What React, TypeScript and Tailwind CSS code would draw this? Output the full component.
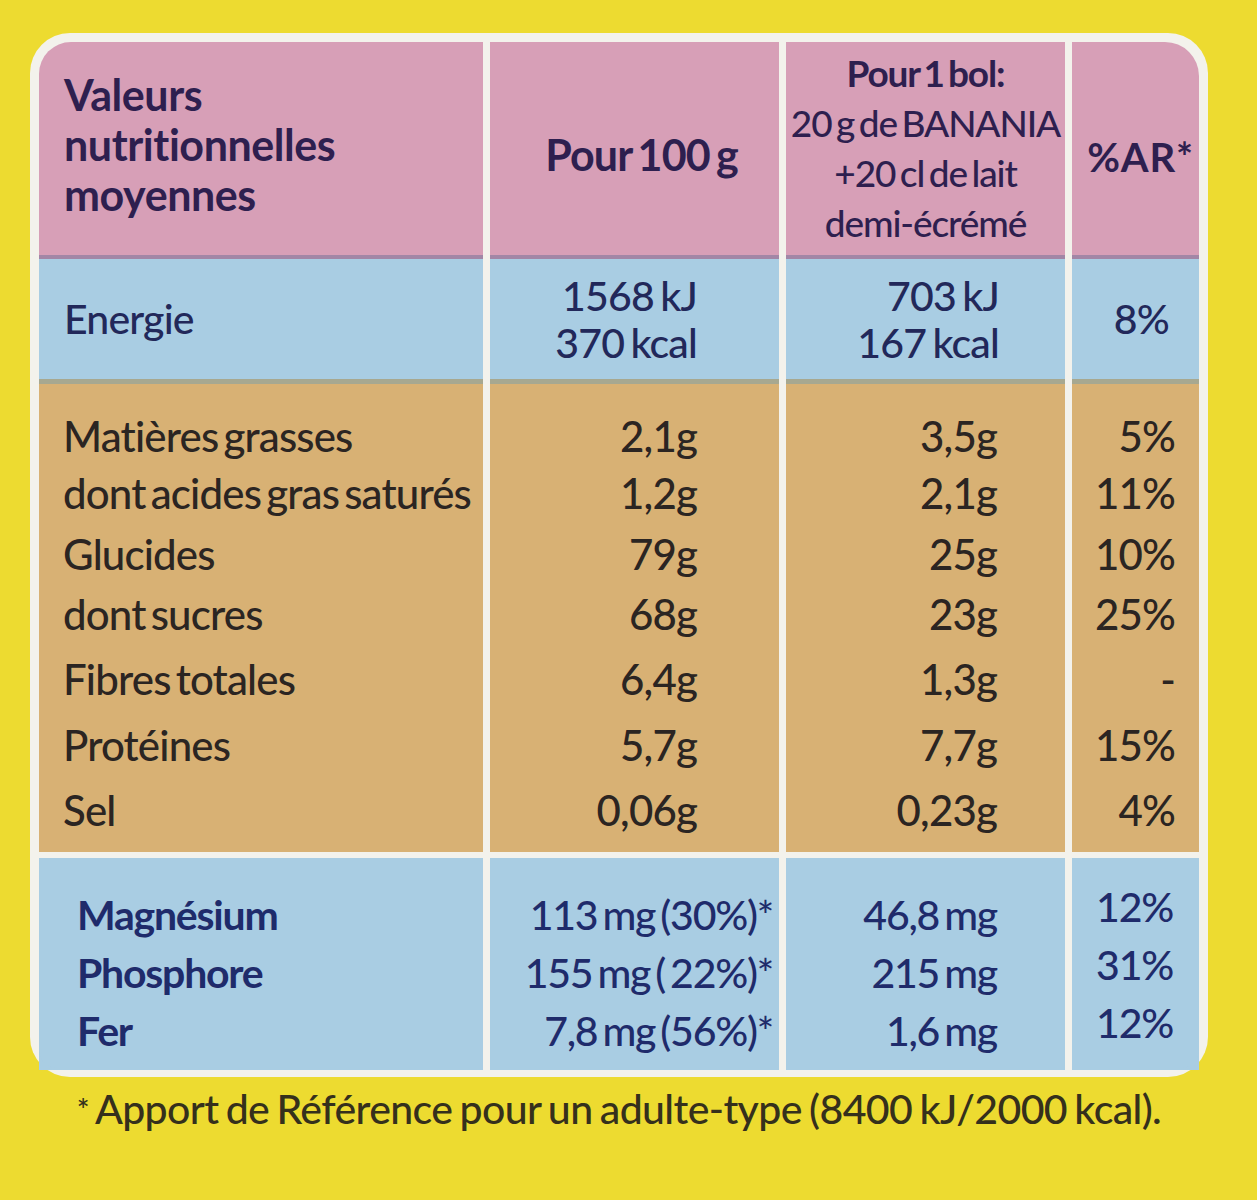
const GRID = "grid grid-cols-[444px_289px_279px_127px] gap-x-[7px]";

const tanRows = [
  { h: "h-[57px]", label: "Matières grasses", a: "2,1g", b: "3,5g", c: "5%" },
  { h: "h-[61px]", label: "dont acides gras saturés", a: "1,2g", b: "2,1g", c: "11%" },
  { h: "h-[60px]", label: "Glucides", a: "79g", b: "25g", c: "10%" },
  { h: "h-[62px]", label: "dont sucres", a: "68g", b: "23g", c: "25%" },
  { h: "h-[68px]", label: "Fibres totales", a: "6,4g", b: "1,3g", c: "-" },
  { h: "h-[65px]", label: "Protéines", a: "5,7g", b: "7,7g", c: "15%" },
  { h: "h-[64px]", label: "Sel", a: "0,06g", b: "0,23g", c: "4%" },
];

const minerals = [
  { label: "Magnésium", a: "113 mg (30%)*", b: "46,8 mg", c: "12%" },
  { label: "Phosphore", a: "155 mg ( 22%)*", b: "215 mg", c: "31%" },
  { label: "Fer", a: "7,8 mg (56%)*", b: "1,6 mg", c: "12%" },
];

const tan = "bg-[#d8b174]";
const blue = "bg-[#a9cde3]";
const pink = "bg-[#d79fb7]";

function Spacer({ bg, h, round }: { bg: string; h: string; round?: boolean }) {
  return (
    <div className={`${GRID} ${h}`}>
      <div className={`${bg} ${round ? "rounded-bl-[34px]" : ""}`} />
      <div className={bg} />
      <div className={bg} />
      <div className={`${bg} ${round ? "rounded-br-[28px]" : ""}`} />
    </div>
  );
}

// text sits above the next row's background so descenders are not covered
function T({ children }: { children: React.ReactNode }) {
  return <span className="relative whitespace-nowrap">{children}</span>;
}

export default function App() {
  return (
    <div
      className="w-[1257px] h-[1200px] bg-[#eddb30] pt-[33px] pl-[30px] font-medium"
      style={{ fontFamily: "Lato, 'Open Sans', sans-serif" }}
    >
      <div className="w-[1178px] bg-[#f3f2ec] rounded-[40px] p-[9px]">
        {/* header */}
        <div className={`${GRID} h-[217px] text-[#2e1f4f]`}>
          <div className={`${pink} rounded-tl-[32px] border-b-4 border-[#a286a6] pl-[25px] pt-[28px] text-[43px] font-bold leading-[50px] tracking-[-0.01em]`}>
            Valeurs
            <br />
            nutritionnelles
            <br />
            moyennes
          </div>
          <div className={`${pink} border-b-4 border-[#a286a6] flex items-center justify-center pt-[14px] pl-[14px] text-[43px] font-bold tracking-[-0.02em] [word-spacing:-0.08em]`}>
            Pour 100 g
          </div>
          <div className={`${pink} border-b-4 border-[#a286a6] pt-[6px] text-center text-[37px] leading-[50px] tracking-[-0.03em] [word-spacing:-0.1em]`}>
            <div className="font-bold">Pour 1 bol:</div>
            <div>20 g de BANANIA</div>
            <div>+20 cl de lait</div>
            <div>demi-écrémé</div>
          </div>
          <div className={`${pink} rounded-tr-[34px] border-b-4 border-[#a286a6] flex items-center justify-center pt-[16px] pl-[10px] text-[40px] font-bold tracking-[0.02em]`}>
            %AR*
          </div>
        </div>

        {/* energy */}
        <div className={`${GRID} h-[125px] text-[#22285a] text-[41px] tracking-[-0.02em] [word-spacing:-0.08em]`}>
          <div className={`${blue} border-b-[5px] border-[#a7a890] flex items-center pl-[25px]`}>Energie</div>
          <div className={`${blue} border-b-[5px] border-[#a7a890] flex flex-col justify-center items-end pr-[82px] leading-[47px]`}>
            <div>1568 kJ</div>
            <div>370 kcal</div>
          </div>
          <div className={`${blue} border-b-[5px] border-[#a7a890] flex flex-col justify-center items-end pr-[66px] leading-[47px]`}>
            <div>703 kJ</div>
            <div>167 kcal</div>
          </div>
          <div className={`${blue} border-b-[5px] border-[#a7a890] flex items-center justify-end pr-[30px]`}>8%</div>
        </div>

        {/* macros */}
        <div className="text-[42px] text-[#2b2522] tracking-[-0.02em]">
          <Spacer bg={tan} h="h-[21px]" />
          {tanRows.map((r) => (
            <div key={r.label} className={`${GRID} ${r.h}`}>
              <div className={`${tan} flex items-center pl-[24px] [word-spacing:-0.11em]`}><T>{r.label}</T></div>
              <div className={`${tan} flex items-center justify-end pr-[82px]`}><T>{r.a}</T></div>
              <div className={`${tan} flex items-center justify-end pr-[68px]`}><T>{r.b}</T></div>
              <div className={`${tan} flex items-center justify-end pr-[24px]`}><T>{r.c}</T></div>
            </div>
          ))}
          <Spacer bg={tan} h="h-[10px]" />
        </div>

        {/* minerals */}
        <div className="mt-[6px] text-[41px] text-[#1f2b6b] tracking-[-0.03em]">
          <Spacer bg={blue} h="h-[18px]" />
          {minerals.map((r) => (
            <div key={r.label} className={`${GRID} h-[58px]`}>
              <div className={`${blue} flex items-center pl-[38px] font-bold`}><T>{r.label}</T></div>
              <div className={`${blue} flex items-center justify-end pr-[6px] [word-spacing:-0.1em]`}><T>{r.a}</T></div>
              <div className={`${blue} flex items-center justify-end pr-[68px] [word-spacing:-0.1em]`}><T>{r.b}</T></div>
              <div className={`${blue} flex items-center justify-end pr-[26px] pb-[16px]`}><T>{r.c}</T></div>
            </div>
          ))}
          <Spacer bg={blue} h="h-[18px]" round />
        </div>
      </div>

      <p className="w-[1178px] mt-[8px] text-center text-[41px] leading-[48px] text-[#35301c] tracking-[-0.015em] [word-spacing:-0.06em] whitespace-nowrap">
        <span className="align-top text-[30px]">*</span> Apport de Référence pour un adulte-type (8400 kJ/2000 kcal).
      </p>
    </div>
  );
}
